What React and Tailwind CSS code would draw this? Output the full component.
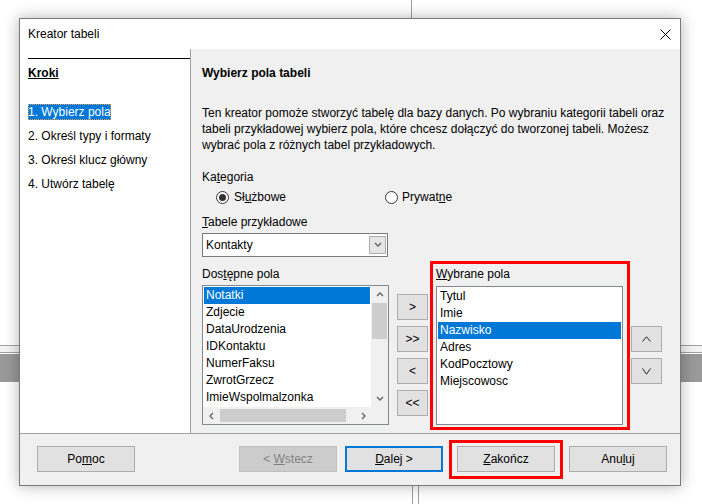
import React from 'react';

const font = "font-['Liberation_Sans',Arial,sans-serif]";

function Chevron({ dir = 'down', className = '' }) {
  const d = {
    up: 'M1 5 L4 2 L7 5',
    down: 'M1 2 L4 5 L7 2',
    left: 'M5 1 L2 4 L5 7',
    right: 'M3 1 L6 4 L3 7',
  }[dir];
  return (
    <svg width="8" height="8" viewBox="0 0 8 8" className={className}>
      <path d={d} fill="none" stroke="#606060" strokeWidth="1.3" />
    </svg>
  );
}

function Btn({ children, className = '' }) {
  return (
    <div className={`flex items-center justify-center h-[26px] w-[98px] bg-[#e1e1e1] border border-[#adadad] whitespace-pre ${className}`}>
      {children}
    </div>
  );
}

function SmallBtn({ children }) {
  return (
    <div className="flex items-center justify-center w-[31px] h-[26px] bg-[#e1e1e1] border border-[#adadad] text-[12px] leading-none">
      {children}
    </div>
  );
}

function Radio({ checked }) {
  return (
    <div className="w-[13px] h-[13px] rounded-full border border-[#333] bg-white flex items-center justify-center">
      {checked && <div className="w-[7px] h-[7px] rounded-full bg-[#333]" />}
    </div>
  );
}

function ListItem({ text, selected }) {
  return (
    <div className={`h-[17px] leading-[17px] pl-[2px] whitespace-nowrap ${selected ? 'bg-[#0078d7] text-white' : ''}`}>
      {text}
    </div>
  );
}

const available = ['Notatki', 'Zdjecie', 'DataUrodzenia', 'IDKontaktu', 'NumerFaksu', 'ZwrotGrzecz', 'ImieWspolmalzonka'];
const chosen = ['Tytul', 'Imie', 'Nazwisko', 'Adres', 'KodPocztowy', 'Miejscowosc'];
const steps = ['1. Wybierz pola', '2. Określ typy i formaty', '3. Określ klucz główny', '4. Utwórz tabelę'];

export default function App() {
  return (
    <div className={`relative w-[702px] h-[504px] overflow-hidden bg-white text-[12px] text-black ${font}`}>
      {/* desktop behind the dialog */}
      <div className="flex flex-col h-full">
        <div className="h-[345px]">
          <div className="ml-[411px] w-px h-[18px] bg-[#a0a0a0]" />
        </div>
        <div className="h-px bg-[#a0a0a0]" />
        <div className="h-[6px] bg-[#f3f3f3]" />
        <div className="h-px bg-[#a0a0a0]" />
        <div className="h-px bg-white" />
        <div className="h-[28px] bg-[#999999]" />
        <div className="flex-1" />
        <div className="h-[18px] flex">
          <div className="ml-[412px] w-px bg-[#a0a0a0]" />
          <div className="ml-[5px] w-px bg-[#a0a0a0]" />
        </div>
      </div>

      {/* dialog window */}
      <div className="absolute left-[19px] top-[18px] w-[662px] h-[468px] border border-[#7a7a7a] bg-[#f0f0f0] flex flex-col shadow-[0_0_14px_rgba(0,0,0,0.3)]">
        <div className="h-[30px] bg-white flex items-center justify-between pl-[8px] pr-[9px]">
          <span>Kreator tabeli</span>
          <svg width="11" height="11" viewBox="0 0 11 11">
            <path d="M0.5 0.5 L10.5 10.5 M10.5 0.5 L0.5 10.5" stroke="#000" strokeWidth="1" />
          </svg>
        </div>

        <div className="h-[384px] flex">
          {/* steps */}
          <div className="w-[171px] bg-white border-r border-[#a0a0a0] pt-[9px]">
            <div className="ml-[8px] h-px bg-black" />
            <div className="ml-[8px] mt-[6px] leading-[16px] font-bold underline">Kroki</div>
            <div className="ml-[8px] mt-[23px] flex flex-col gap-[8px] leading-[16px]">
              {steps.map((s, i) => (
                <div key={s}>
                  {i === 0 ? (
                    <span className="inline-block bg-[#0078d7] text-white outline-1 outline-dotted outline-[#e0a060] -outline-offset-1">{s}</span>
                  ) : (
                    s
                  )}
                </div>
              ))}
            </div>
          </div>

          {/* main page */}
          <div className="flex-1 pl-[11px] pt-[16px] leading-[16px]">
            <div className="font-bold">Wybierz pola tabeli</div>
            <div className="mt-[24px] whitespace-nowrap">
              <div>Ten kreator pomoże stworzyć tabelę dla bazy danych. Po wybraniu kategorii tabeli oraz</div>
              <div>tabeli przykładowej wybierz pola, które chcesz dołączyć do tworzonej tabeli. Możesz</div>
              <div>wybrać pola z różnych tabel przykładowych.</div>
            </div>

            <div className="mt-[16px]">Ka<u>t</u>egoria</div>
            <div className="mt-[4px] h-[16px] flex items-center">
              <div className="ml-[14px]"><Radio checked /></div>
              <span className="ml-[5px]">Sł<u>u</u>żbowe</span>
              <div className="ml-[99px]"><Radio /></div>
              <span className="ml-[4px]">Prywat<u>n</u>e</span>
            </div>

            <div className="mt-[9px]"><u>T</u>abele przykładowe</div>
            <div className="mt-[3px] w-[186px] h-[24px] border border-[#7a7a7a] bg-white flex items-center justify-between pl-[3px] pr-[1px]">
              <span>Kontakty</span>
              <div className="w-[17px] h-[18px] bg-[#e5e5e5] border border-[#adadad] flex items-center justify-center">
                <Chevron dir="down" />
              </div>
            </div>

            <div className="mt-[4px] flex items-start">
              {/* available fields */}
              <div className="pt-[5px]">
                <div>Dos<u>t</u>ępne pola</div>
                <div className="mt-[3px] w-[187px] h-[140px] border border-[#828790] bg-white flex flex-col">
                  <div className="flex flex-1 min-h-0">
                    <div className="flex-1 p-px overflow-hidden">
                      {available.map((t, i) => <ListItem key={t} text={t} selected={i === 0} />)}
                    </div>
                    <div className="w-[17px] bg-[#f0f0f0] flex flex-col items-center">
                      <div className="h-[17px] flex items-center justify-center"><Chevron dir="up" /></div>
                      <div className="w-[15px] h-[36px] bg-[#cdcdcd]" />
                      <div className="flex-1" />
                      <div className="h-[17px] flex items-center justify-center"><Chevron dir="down" /></div>
                    </div>
                  </div>
                  <div className="h-[17px] flex">
                    <div className="flex-1 bg-[#f0f0f0] flex items-center">
                      <div className="w-[17px] flex justify-center"><Chevron dir="left" /></div>
                      <div className="w-[126px] h-[13px] bg-[#cdcdcd]" />
                      <div className="flex-1" />
                      <div className="w-[17px] flex justify-center"><Chevron dir="right" /></div>
                    </div>
                    <div className="w-[17px] bg-[#f0f0f0]" />
                  </div>
                </div>
              </div>

              {/* move buttons */}
              <div className="ml-[8px] pt-[33px] flex flex-col gap-[6px]">
                <SmallBtn>&gt;</SmallBtn>
                <SmallBtn>&gt;&gt;</SmallBtn>
                <SmallBtn>&lt;</SmallBtn>
                <SmallBtn>&lt;&lt;</SmallBtn>
              </div>

              {/* chosen fields, highlighted */}
              <div className="ml-[2px] w-[200px] h-[169px] border-[3px] border-[#ff0000] pl-[3px] pt-[2px]">
                <div><u>W</u>ybrane pola</div>
                <div className="mt-[4px] w-[187px] h-[139px] border border-[#828790] bg-white p-px">
                  {chosen.map((t, i) => <ListItem key={t} text={t} selected={i === 2} />)}
                </div>
              </div>

              {/* order buttons */}
              <div className="ml-[1px] pt-[65px] flex flex-col gap-[6px]">
                <SmallBtn>
                  <svg width="9" height="6" viewBox="0 0 9 6"><path d="M0.5 5.5 L4.5 0.8 L8.5 5.5" fill="none" stroke="#222" strokeWidth="1" /></svg>
                </SmallBtn>
                <SmallBtn>
                  <svg width="9" height="7" viewBox="0 0 9 7"><path d="M0.5 0.5 L4.5 6.2 L8.5 0.5" fill="none" stroke="#222" strokeWidth="1" /></svg>
                </SmallBtn>
              </div>
            </div>
          </div>
        </div>

        {/* button row */}
        <div className="flex-1 border-t border-[#a0a0a0]">
          <div className="mt-[12px] h-[26px] flex items-center pl-[17px]">
            <Btn>Po<u>m</u>oc</Btn>
            <Btn className="ml-[104px] !bg-[#cccccc] !border-[#bfbfbf] text-[#838383]">{'< '}<u>W</u>stecz</Btn>
            <Btn className="ml-[8px] !border-2 !border-[#0078d7]"><u>D</u>alej{' >'}</Btn>
            <div className="ml-[6px] w-[114px] h-[39px] border-[3px] border-[#ff0000] flex items-center pl-[5px] shrink-0">
              <Btn><u>Z</u>akończ</Btn>
            </div>
            <Btn className="ml-[6px]">Anu<u>l</u>uj</Btn>
          </div>
        </div>
      </div>
    </div>
  );
}
